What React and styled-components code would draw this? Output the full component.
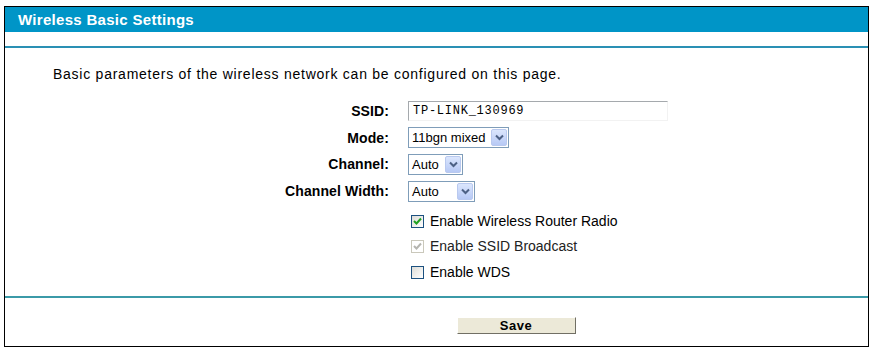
import styled, { createGlobalStyle } from "styled-components";

const GlobalStyle = createGlobalStyle`
  body {
    margin: 0;
    background: #ffffff;
    font-family: "Liberation Sans", Arial, sans-serif;
  }
`;

function Arrow() {
  return (
    <svg width="9" height="7" viewBox="0 0 9 7">
      <path d="M1 1.5 L4.5 5 L8 1.5" fill="none" stroke="#4d6185" strokeWidth="2" />
    </svg>
  );
}

function Check({ disabled }) {
  return (
    <svg width="9" height="9" viewBox="0 0 9 9">
      <path
        d="M1 4 L3.5 6.5 L8 1.5"
        fill="none"
        stroke={disabled ? "#b5b5b0" : "#21a121"}
        strokeWidth="2"
      />
    </svg>
  );
}

function Select({ value, width }) {
  return (
    <SelectBox $width={width}>
      <SelectText>{value}</SelectText>
      <ArrowBox>
        <Arrow />
      </ArrowBox>
    </SelectBox>
  );
}

function Checkbox({ checked, disabled, label }) {
  return (
    <CheckRow>
      <Box $disabled={disabled}>{checked && <Check disabled={disabled} />}</Box>
      <CheckLabel $disabled={disabled}>{label}</CheckLabel>
    </CheckRow>
  );
}

export default function App() {
  return (
    <Page>
      <GlobalStyle />
      <Frame>
        <Header>Wireless Basic Settings</Header>
        <Spacer />
        <Content>
          <Description>
            Basic parameters of the wireless network can be configured on this page.
          </Description>
          <Form>
            <Row $h={27}>
              <Label>SSID:</Label>
              <TextInput>TP-LINK_130969</TextInput>
            </Row>
            <Row $h={27}>
              <Label>Mode:</Label>
              <Select value="11bgn mixed" width={101} />
            </Row>
            <Row $h={26}>
              <Label>Channel:</Label>
              <Select value="Auto" width={55} />
            </Row>
            <Row $h={28}>
              <Label>Channel Width:</Label>
              <Select value="Auto" width={67} />
            </Row>
            <Row $h={32}>
              <Label />
              <Checkbox checked label="Enable Wireless Router Radio" />
            </Row>
            <Row $h={18}>
              <Label />
              <Checkbox checked disabled label="Enable SSID Broadcast" />
            </Row>
            <Row $h={34}>
              <Label />
              <Checkbox label="Enable WDS" />
            </Row>
          </Form>
        </Content>
        <Footer>
          <SaveButton>Save</SaveButton>
        </Footer>
      </Frame>
    </Page>
  );
}

const Page = styled.div`
  padding: 6px 0 0 4px;
`;

const Frame = styled.div`
  width: 863px;
  height: 339px;
  border: 1px solid #000000;
  display: flex;
  flex-direction: column;
`;

const Header = styled.div`
  height: 25px;
  background: #0095c7;
  color: #ffffff;
  font-size: 15px;
  font-weight: bold;
  letter-spacing: 0.3px;
  line-height: 25px;
  padding-left: 13px;
`;

const Spacer = styled.div`
  height: 14px;
  border-bottom: 2px solid #2a90b4;
`;

const Content = styled.div`
  padding: 18px 0 7px 48px;
  border-bottom: 2px solid #3b9aa8;
`;

const Description = styled.div`
  font-size: 14px;
  letter-spacing: 0.75px;
  line-height: 16px;
  color: #000000;
  margin-bottom: 15px;
`;

const Form = styled.div`
  display: flex;
  flex-direction: column;
`;

const Row = styled.div`
  display: grid;
  grid-template-columns: 336px 1fr;
  column-gap: 19px;
  align-items: center;
  height: ${(p) => p.$h}px;
`;

const Label = styled.div`
  text-align: right;
  font-size: 14px;
  font-weight: bold;
  letter-spacing: 0.1px;
  color: #000000;
`;

const TextInput = styled.div`
  width: 254px;
  height: 18px;
  border-top: 1px solid #a5a9ad;
  border-left: 1px solid #a5a9ad;
  border-right: 1px solid #f2f2f2;
  border-bottom: 1px solid #f2f2f2;
  font-family: "Liberation Mono", "Courier New", monospace;
  font-size: 12px;
  line-height: 18px;
  padding-left: 4px;
  letter-spacing: 0.75px;
`;

const SelectBox = styled.div`
  width: ${(p) => p.$width}px;
  height: 21px;
  box-sizing: border-box;
  border: 1px solid #7f9db9;
  display: flex;
  align-items: center;
  justify-content: space-between;
  padding: 1px;
  background: #ffffff;
`;

const SelectText = styled.span`
  font-size: 13px;
  padding-left: 2px;
  color: #000000;
`;

const ArrowBox = styled.div`
  width: 16px;
  height: 17px;
  box-sizing: border-box;
  border: 1px solid #b9c9ef;
  border-radius: 2px;
  background: linear-gradient(#dbe6fd, #b7c9f5);
  display: flex;
  align-items: center;
  justify-content: center;
`;

const CheckRow = styled.div`
  display: flex;
  align-items: center;
  gap: 6px;
  padding-left: 3px;
`;

const Box = styled.div`
  width: 13px;
  height: 13px;
  box-sizing: border-box;
  border: 1px solid ${(p) => (p.$disabled ? "#cac8bb" : "#1c5180")};
  background: ${(p) =>
    p.$disabled ? "#ffffff" : "linear-gradient(135deg, #dcdcd7, #ffffff)"};
  display: flex;
  align-items: center;
  justify-content: center;
`;

const CheckLabel = styled.span`
  font-size: 14px;
  color: ${(p) => (p.$disabled ? "#222222" : "#000000")};
`;

const Footer = styled.div`
  flex: 1;
  display: flex;
  justify-content: center;
  align-items: flex-start;
  padding-top: 19px;
  padding-left: 159px;
`;

const SaveButton = styled.button`
  width: 119px;
  height: 17px;
  padding: 0;
  background: #ece9d8;
  border-top: 1px solid #ffffff;
  border-left: 1px solid #ffffff;
  border-right: 1px solid #716f64;
  border-bottom: 1px solid #716f64;
  font-family: "Liberation Sans", Arial, sans-serif;
  font-size: 13px;
  font-weight: bold;
  letter-spacing: 0.5px;
  line-height: 15px;
  color: #000000;
`;
